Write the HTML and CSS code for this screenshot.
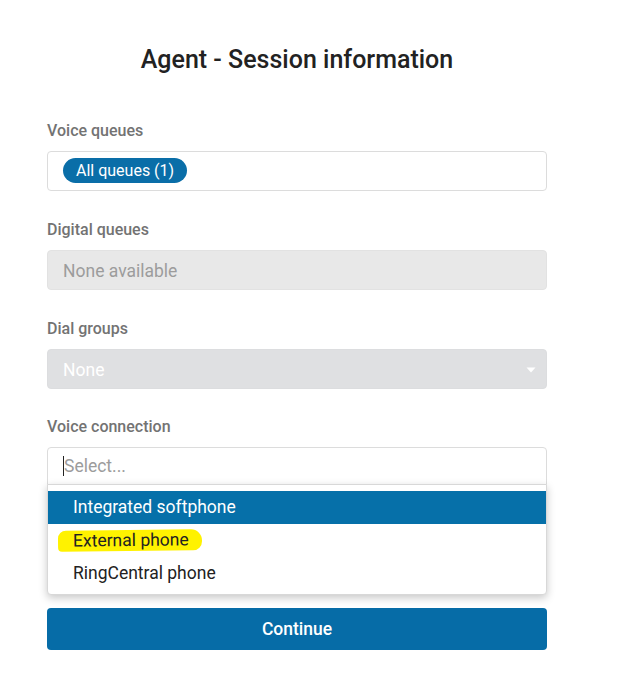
FILE: index.html
```html
<!DOCTYPE html>
<html>
<head>
<meta charset="utf-8">
<link rel="stylesheet" href="styles.css">
</head>
<body>
<div class="page">
  <h1 class="title">Agent - Session information</h1>
  <div class="form">
    <div class="field">
      <div class="label">Voice queues</div>
      <div class="box box-white">
        <span class="chip">All queues (1)</span>
      </div>
    </div>
    <div class="field">
      <div class="label">Digital queues</div>
      <div class="box box-disabled">
        <span class="muted">None available</span>
      </div>
    </div>
    <div class="field field-tight">
      <div class="label">Dial groups</div>
      <div class="box box-select-disabled">
        <span class="white-text">None</span>
        <svg class="caret" width="10" height="6" viewBox="0 0 10 6"><path d="M0.5 0.5 L9.5 0.5 L5 5.5 Z" fill="#ffffff"/></svg>
      </div>
    </div>
    <div class="field field-open">
      <div class="label">Voice connection</div>
      <div class="select-wrap">
        <div class="box box-white box-open">
          <span class="cursor"></span><span class="placeholder">Select...</span>
        </div>
        <ul class="menu">
          <li class="option option-active">Integrated softphone</li>
          <li class="option"><span class="marker">External phone</span></li>
          <li class="option">RingCentral phone</li>
        </ul>
      </div>
    </div>
    <button class="continue">Continue</button>
  </div>
</div>
</body>
</html>
```
FILE: styles.css
```css
* { box-sizing: border-box; }
html, body { margin: 0; padding: 0; background: #ffffff; }
body { font-family: Roboto, "Liberation Sans", Arial, sans-serif; color: #222; }
.page { width: 627px; padding-top: 46px; }
.title {
  margin: 0;
  font-size: 25px;
  line-height: 28px;
  font-weight: 500;
  text-align: center;
  color: #222;
  padding-right: 33px;
}
.form {
  width: 500px;
  margin-left: 47px;
  margin-top: 47px;
  display: flex;
  flex-direction: column;
}
.field { display: flex; flex-direction: column; margin-bottom: 29px; }
.field-tight { margin-bottom: 28px; }
.label {
  font-size: 16px;
  line-height: 20px;
  font-weight: 500;
  color: #737373;
  margin-bottom: 10px;
}
.box {
  height: 40px;
  border-radius: 4px;
  display: flex;
  align-items: center;
  padding: 2px 15px 0;
  font-size: 17.5px;
  position: relative;
}
.box-white { background: #fff; border: 1px solid #dcdcdc; }
.box-disabled { background: #e8e8e8; border: 1px solid #e2e2e2; }
.box-select-disabled { background: #dfe0e2; border: 1px solid #dcdddf; justify-content: space-between; }
.chip {
  background: #0a6ea8;
  color: #fff;
  font-size: 16px;
  line-height: 25px;
  height: 25px;
  padding: 0 13px;
  border-radius: 13px;
  margin-top: -3px;
}
.muted { color: #9c9c9c; }
.white-text { color: #ffffff; }
.caret { margin-right: -5px; margin-top: -1px; }
.field-open { margin-bottom: 0; }
.select-wrap { position: relative; }
.box-open { height: 38px; border-radius: 4px 4px 0 0; padding-top: 0; }
.cursor {
  display: inline-block;
  width: 1px;
  height: 20px;
  background: #222;
  margin-right: 0;
}
.placeholder { color: #9c9c9c; }
.menu {
  position: absolute;
  left: 0;
  right: 0;
  top: 37px;
  margin: 0;
  padding: 6px 0 4px;
  list-style: none;
  background: #fff;
  border: 1px solid #d8d8d8;
  border-radius: 0 0 4px 4px;
  box-shadow: 0 3px 9px rgba(0,0,0,0.22);
  z-index: 2;
}
.option {
  height: 33px;
  line-height: 33px;
  padding: 0 25px;
  font-size: 17.5px;
  color: #222;
}
.option-active { background: #0670a9; color: #fff; }
.marker {
  display: inline-block;
  line-height: 21px;
  margin-left: -15px;
  padding: 0 13px 0 15px;
  background: #fff200;
  border-radius: 8px 11px 9px 4px;
  transform: rotate(-0.6deg);
}
.continue {
  margin-top: 123px;
  height: 42px;
  width: 500px;
  border: none;
  border-radius: 4px;
  background: #066ca7;
  color: #fff;
  font-family: Roboto, "Liberation Sans", Arial, sans-serif;
  font-size: 17.5px;
  font-weight: 500;
  padding: 0;
}
```
